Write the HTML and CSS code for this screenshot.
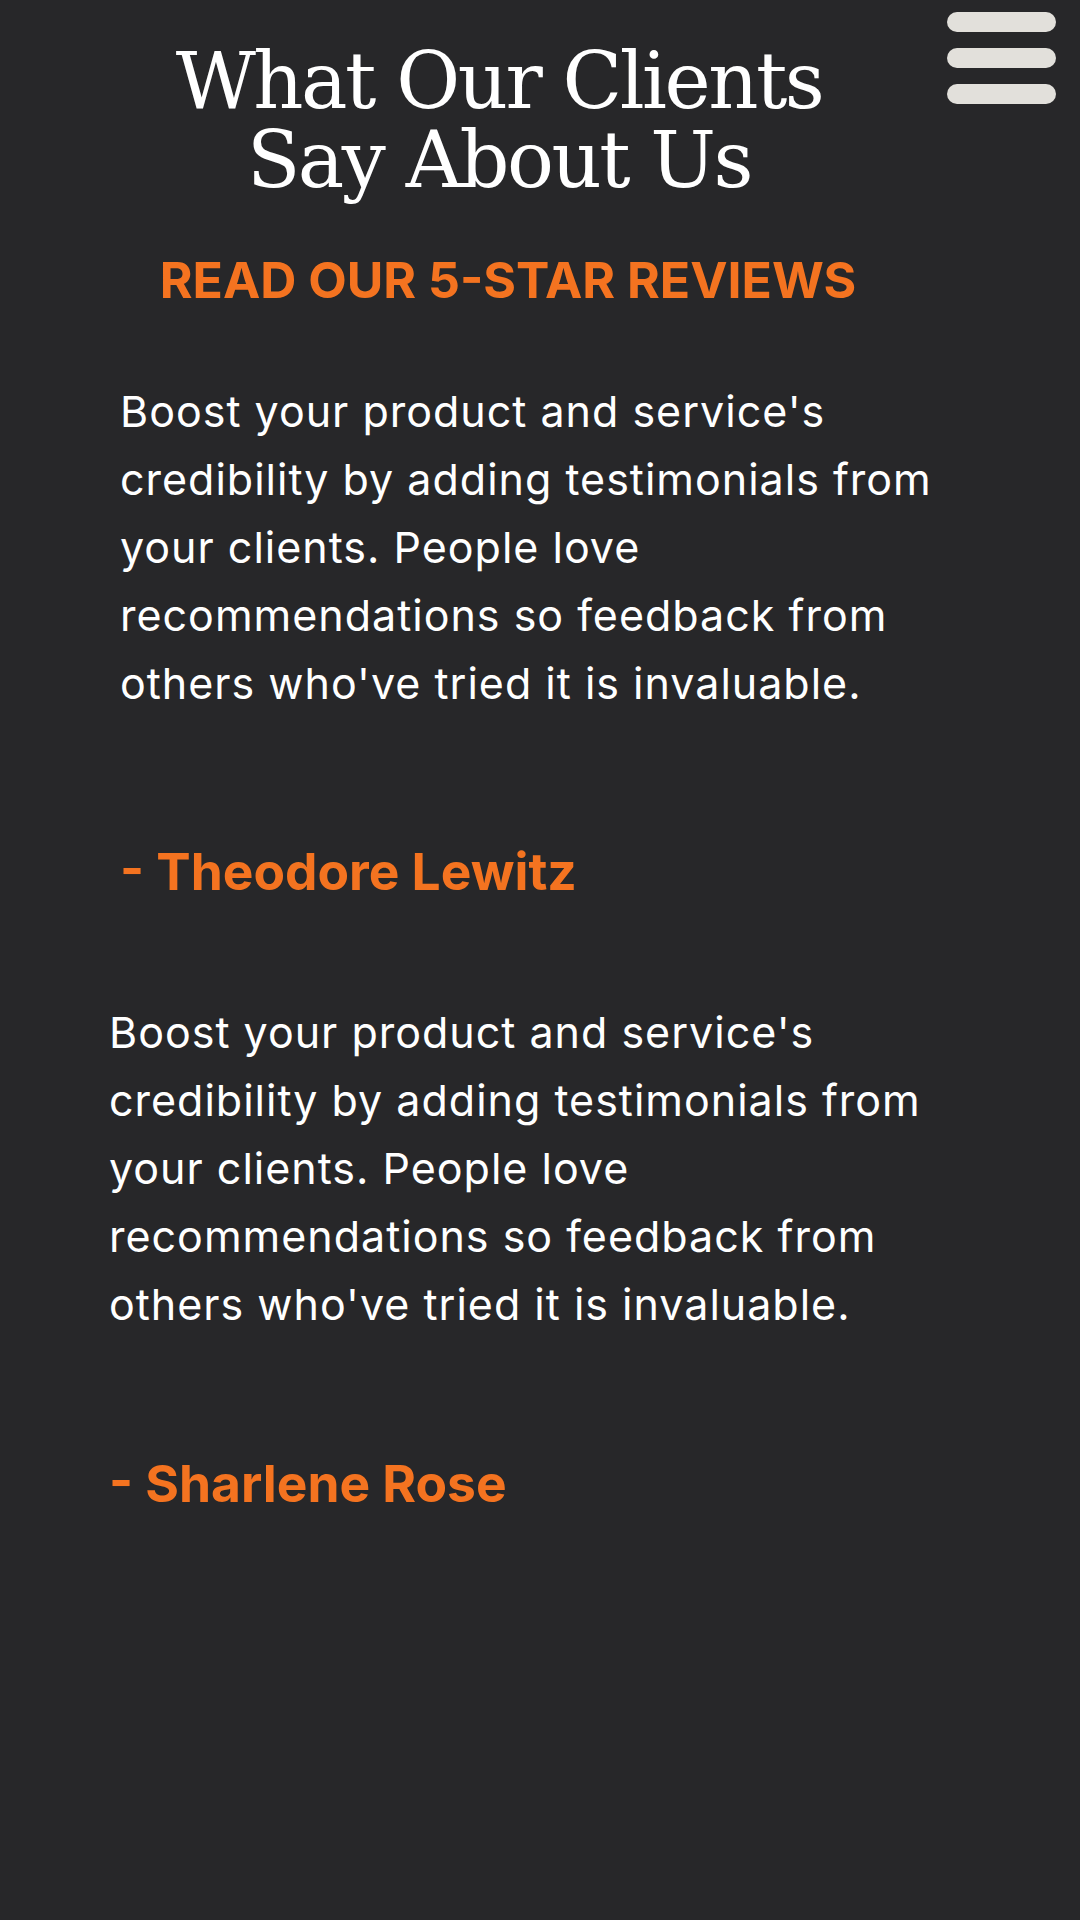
FILE: index.html
```html
<!DOCTYPE html>
<html lang="en">
<head>
<meta charset="utf-8">
<title>What Our Clients Say About Us</title>
<link rel="stylesheet" href="styles.css">
</head>
<body>
<header class="hero">
  <h1 class="title">What Our Clients<br>Say About Us</h1>
  <button class="menu" aria-label="Menu">
    <span class="bar"></span>
    <span class="bar"></span>
    <span class="bar"></span>
  </button>
  <h2 class="kicker">READ OUR 5-STAR REVIEWS</h2>
</header>
<main class="reviews">
  <article class="review review-first">
    <p class="quote">Boost your product and service's credibility by adding testimonials from your clients. People love recommendations so feedback from others who've tried it is invaluable.</p>
    <p class="author">- Theodore Lewitz</p>
  </article>
  <article class="review review-second">
    <p class="quote">Boost your product and service's credibility by adding testimonials from your clients. People love recommendations so feedback from others who've tried it is invaluable.</p>
    <p class="author">- Sharlene Rose</p>
  </article>
</main>
</body>
</html>
```

FILE: styles.css
```css
* { box-sizing: border-box; }
html, body {
  margin: 0;
  padding: 0;
  background: #272729;
  min-height: 1920px;
}
body {
  font-family: Inter, "Noto Sans", sans-serif;
  color: #ffffff;
}
.hero {
  position: relative;
  padding-top: 42px;
  padding-right: 82px;
  text-align: center;
}
.title {
  margin: 0;
  font-family: "DejaVu Serif", "Liberation Serif", serif;
  font-weight: 400;
  font-size: 78px;
  line-height: 79px;
  letter-spacing: -2.5px;
  color: #ffffff;
}
.menu {
  position: absolute;
  top: 12px;
  right: 24px;
  width: 109px;
  padding: 0;
  border: 0;
  background: none;
  display: flex;
  flex-direction: column;
  gap: 16px;
}
.bar {
  display: block;
  height: 20px;
  border-radius: 10px;
  background: #e2e0db;
}
.kicker {
  margin: 50px 0 0;
  padding-left: 18px;
  font-family: Inter, "Noto Sans", sans-serif;
  font-weight: 700;
  font-size: 50px;
  line-height: 60px;
  color: #f47320;
}
.reviews {
  display: flex;
  flex-direction: column;
}
.review-first {
  margin-top: 67px;
  padding-left: 120px;
}
.review-second {
  margin-top: 97px;
  padding-left: 109px;
}
.quote {
  margin: 0;
  max-width: 850px;
  font-size: 43px;
  line-height: 68px;
  letter-spacing: 1px;
  color: #ffffff;
}
.author {
  margin: 124px 0 0;
  font-weight: 700;
  font-size: 51.5px;
  line-height: 60px;
  color: #f47320;
}
.review-second .author {
  margin-top: 115px;
}
```
